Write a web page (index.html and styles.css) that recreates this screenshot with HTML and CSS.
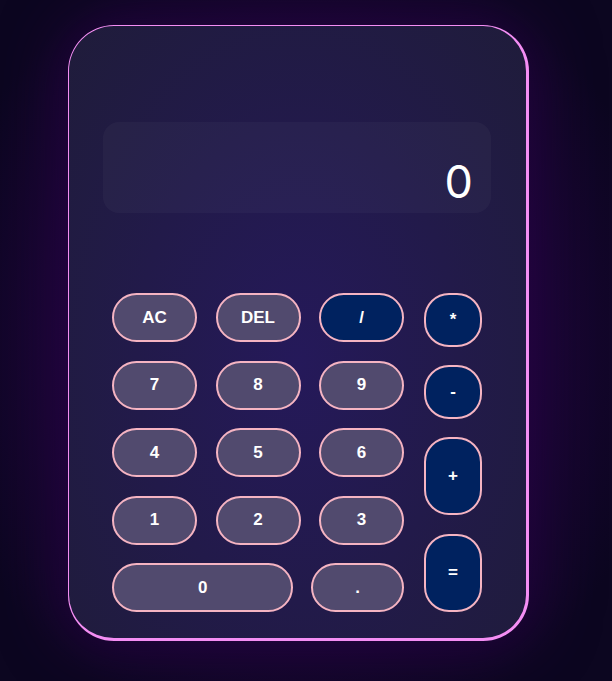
FILE: index.html
```html
<!DOCTYPE html>
<html lang="en">
<head>
<meta charset="utf-8">
<title>Calculator</title>
<link rel="stylesheet" href="styles.css">
</head>
<body>
  <div class="calculator">
    <div class="display"><span class="display-value">0</span></div>
    <div class="keypad">
      <div class="keys-main">
        <div class="key-row">
          <button class="key key-grey">AC</button>
          <button class="key key-grey">DEL</button>
          <button class="key key-navy">/</button>
        </div>
        <div class="key-row">
          <button class="key key-grey">7</button>
          <button class="key key-grey">8</button>
          <button class="key key-grey">9</button>
        </div>
        <div class="key-row">
          <button class="key key-grey">4</button>
          <button class="key key-grey">5</button>
          <button class="key key-grey">6</button>
        </div>
        <div class="key-row">
          <button class="key key-grey">1</button>
          <button class="key key-grey">2</button>
          <button class="key key-grey">3</button>
        </div>
        <div class="key-row key-row-last">
          <button class="key key-grey key-wide">0</button>
          <button class="key key-grey">.</button>
        </div>
      </div>
      <div class="keys-ops">
        <button class="key key-navy op-short">*</button>
        <button class="key key-navy op-short">-</button>
        <button class="key key-navy op-tall">+</button>
        <button class="key key-navy op-tall">=</button>
      </div>
    </div>
  </div>
</body>
</html>
```

FILE: styles.css
```css
* { box-sizing: border-box; }

html, body {
  margin: 0;
  height: 100%;
}

body {
  background: radial-gradient(ellipse at 49% 50%, #2a0548 0%, #1c0538 45%, #0c0620 85%);
  padding: 25px 0 0 68px;
  font-family: "Liberation Sans", Arial, sans-serif;
  overflow: hidden;
}

.calculator {
  width: 461px;
  height: 616px;
  border-style: solid;
  border-color: #f48ef4;
  border-width: 1px 3px 3px 1px;
  border-radius: 46px;
  background: radial-gradient(ellipse at 50% 55%, #25195a 0%, #221a4a 50%, #1f1c3a 100%);
  box-shadow: 0 0 60px 8px rgba(50, 0, 80, 0.55);
  padding: 96px 35px 25px 34px;
  display: flex;
  flex-direction: column;
}

.display {
  height: 91px;
  border-radius: 16px;
  background: rgba(255, 255, 255, 0.03);
  display: flex;
  justify-content: flex-end;
  align-items: flex-end;
  padding: 0 18px 9px 0;
}

.display-value {
  color: #ffffff;
  font-size: 45px;
  line-height: 45px;
  font-family: Inter, "Liberation Sans", sans-serif;
  font-weight: 400;
}

.keypad {
  margin: 80px 9px 0 9px;
  height: 319px;
  display: flex;
  gap: 20px;
}

.keys-main {
  flex: 1;
  display: flex;
  flex-direction: column;
  gap: 18.5px;
}

.key-row {
  display: flex;
  gap: 18.5px;
  height: 49px;
}

.key-row-last { gap: 18px; }

.key-row .key { flex: 1 1 0; min-width: 0; }
.key-row .key-wide { flex: 2 1 0; }

.keys-ops {
  width: 58px;
  display: flex;
  flex-direction: column;
  gap: 18.5px;
}

.op-short { flex: 2 1 0; }
.op-tall { flex: 3 1 0; }

.key {
  border: 2px solid #f5b4c2;
  border-radius: 25px;
  color: #ffffff;
  font-family: "Liberation Sans", Arial, sans-serif;
  font-weight: bold;
  font-size: 17px;
  padding: 0;
  margin: 0;
  display: flex;
  align-items: center;
  justify-content: center;
}

.key-grey { background: #514a6e; }
.key-navy { background: #00225f; }
```
